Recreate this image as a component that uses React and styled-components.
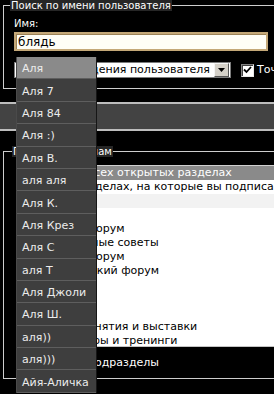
import React from 'react';
import styled, { createGlobalStyle } from 'styled-components';

const Global = createGlobalStyle`
  html, body { margin: 0; padding: 0; background: #000; overflow: hidden; }
  body { font-family: "DejaVu Sans", Verdana, sans-serif; color: #fff; }
`;

const Page = styled.div`
  position: relative;
  width: 274px;
  height: 394px;
  overflow: hidden;
  background: #000;
`;

const Fieldset = styled.fieldset`
  margin: ${(p) => p.$top || 0}px -40px 0 3px;
  padding: 0;
  border: 1px solid #cdcdcd;
  min-width: 0;
`;

const Legend = styled.legend`
  margin-left: ${(p) => p.$offset || 6}px;
  padding: 0 1px;
  font-size: 10px;
  line-height: 11px;
  background: #262626;
  color: #fff;
`;

const SearchBody = styled.div`
  display: flex;
  flex-direction: column;
  align-items: flex-start;
  padding: 7px 0 10px 10px;
`;

const Label = styled.div`
  font-size: 10px;
  line-height: 12px;
  color: #fff;
`;

const NameInput = styled.input`
  margin: 2px 0 0;
  width: 254px;
  height: 19px;
  box-sizing: border-box;
  border: 2px solid #c4a878;
  box-shadow: inset 1px 1px 0 #9c8256;
  background: #fffef6;
  font: 12px "DejaVu Sans", Verdana, sans-serif;
  padding: 0 0 0 2px;
  color: #000;
  outline: none;
`;

const OptionsRow = styled.div`
  display: flex;
  align-items: center;
  margin-top: 11px;
  height: 16px;
`;

const SelectBox = styled.div`
  display: flex;
  align-items: center;
  width: 217px;
  height: 16px;
  box-sizing: border-box;
  border: 1px solid #7c7c7c;
  background: #fff;
  padding-right: 1px;
`;

const SelectText = styled.span`
  flex: 1;
  font-size: 11px;
  line-height: 14px;
  padding-left: 3px;
  color: #000;
  white-space: nowrap;
  overflow: hidden;
`;

const SelectButton = styled.span`
  display: flex;
  align-items: center;
  justify-content: center;
  width: 15px;
  height: 14px;
  box-sizing: border-box;
  background: #d4d0c8;
  border-top: 1px solid #f4f4f4;
  border-left: 1px solid #f4f4f4;
  border-right: 1px solid #555;
  border-bottom: 1px solid #555;
`;

const CheckBox = styled.span`
  display: flex;
  align-items: center;
  justify-content: center;
  width: 13px;
  height: 13px;
  box-sizing: border-box;
  margin-left: ${(p) => p.$gap ?? 10}px;
  background: #fff;
  border-top: 1px solid #808080;
  border-left: 1px solid #808080;
  border-right: 1px solid #e8e8e8;
  border-bottom: 1px solid #e8e8e8;
  box-shadow: inset 1px 1px 0 #404040;
  flex: none;
`;

const CheckText = styled.span`
  margin-left: 3px;
  font-size: 11px;
  line-height: 14px;
  color: #fff;
  white-space: nowrap;
`;

const CatBar = styled.div`
  margin-top: 13px;
  height: 25px;
  background: #434343;
  border-top: 2px solid #bdbdbd;
  border-bottom: 2px solid #bdbdbd;
`;

const ForumBody = styled.div`
  padding: 8px 0 8px 18px;
`;

const ListBox = styled.div`
  height: 180px;
  overflow: hidden;
  background: #fff;
  border-top: 1px solid #d0d0d0;
  border-left: 1px solid #d0d0d0;
  border-bottom: 1px solid #c4c4c4;
`;

const ListOption = styled.div`
  height: 14px;
  line-height: 14px;
  font-size: 11px;
  padding-left: 4px;
  white-space: nowrap;
  color: ${(p) => (p.$selected ? '#fff' : '#000')};
  background: ${(p) => (p.$selected ? '#8a8a8a' : p.$shade ? '#f2f2f2' : '#fff')};
`;

const SubRow = styled.div`
  display: flex;
  align-items: center;
  margin: 9px 0 0 -4px;
  height: 14px;
`;

const Popup = styled.ul`
  position: absolute;
  left: 16px;
  top: 57px;
  width: 81px;
  margin: 0;
  padding: 0;
  list-style: none;
  box-sizing: border-box;
  border-left: 1px solid #4a4a4a;
  border-right: 1px solid #161616;
  background: #3e3e3e;
`;

const PopupItem = styled.li`
  display: flex;
  align-items: center;
  box-sizing: border-box;
  height: 22.4px;
  padding: 2px 0 0 5px;
  font-size: 11px;
  color: #ececec;
  white-space: nowrap;
  background: ${(p) => (p.$active ? '#8a8a8a' : '#3e3e3e')};
  border-bottom: 1px solid #5e5e5e;
`;

const names = [
  'Аля', 'Аля 7', 'Аля 84', 'Аля :)', 'Аля В.', 'аля аля', 'Аля К.', 'Аля Крез',
  'Аля С', 'аля Т', 'Аля Джоли', 'Аля Ш.', 'аля))', 'аля)))', 'Айя-Аличка',
];

const forumOptions = [
  { text: 'Искать во всех открытых разделах', selected: true },
  { text: 'Поиск в разделах, на которые вы подписаны' },
  { text: '', shade: true },
  { text: '' },
  { text: 'Основной форум' },
  { text: 'Всевозможные советы' },
  { text: 'Вечерний форум' },
  { text: 'Экономический форум' },
  { text: '' },
  { text: '' },
  { text: '' },
  { text: 'Пробные занятия и выставки' },
  { text: 'Все семинары и тренинги' },
];

const Tick = () => (
  <svg width="9" height="8" viewBox="0 0 9 8">
    <path d="M1 3.5 L3.5 6 L8 1" fill="none" stroke="#000" strokeWidth="1.8" />
  </svg>
);

export default function App() {
  return (
    <Page>
      <Global />
      <Fieldset>
        <Legend>Поиск по имени пользователя</Legend>
        <SearchBody>
          <Label>Имя:</Label>
          <NameInput defaultValue="блядь" readOnly />
          <OptionsRow>
            <SelectBox>
              <SelectText>Искать сообщения пользователя</SelectText>
              <SelectButton>
                <svg width="7" height="4" viewBox="0 0 7 4">
                  <path d="M0 0 H7 L3.5 4 Z" fill="#000" />
                </svg>
              </SelectButton>
            </SelectBox>
            <CheckBox>
              <Tick />
            </CheckBox>
            <CheckText>Точное совпадение</CheckText>
          </OptionsRow>
        </SearchBody>
      </Fieldset>

      <CatBar />

      <Fieldset $top={15}>
        <Legend $offset={8}>Поиск по форумам</Legend>
        <ForumBody>
          <ListBox>
            {forumOptions.map((o, i) => (
              <ListOption key={i} $selected={o.selected} $shade={o.shade}>
                {o.text || '\u00a0'}
              </ListOption>
            ))}
          </ListBox>
          <SubRow>
            <CheckBox $gap={0}>
              <Tick />
            </CheckBox>
            <CheckText>Включая подразделы</CheckText>
          </SubRow>
        </ForumBody>
      </Fieldset>

      <Popup>
        {names.map((n, i) => (
          <PopupItem key={n} $active={i === 0}>
            {n}
          </PopupItem>
        ))}
      </Popup>
    </Page>
  );
}
